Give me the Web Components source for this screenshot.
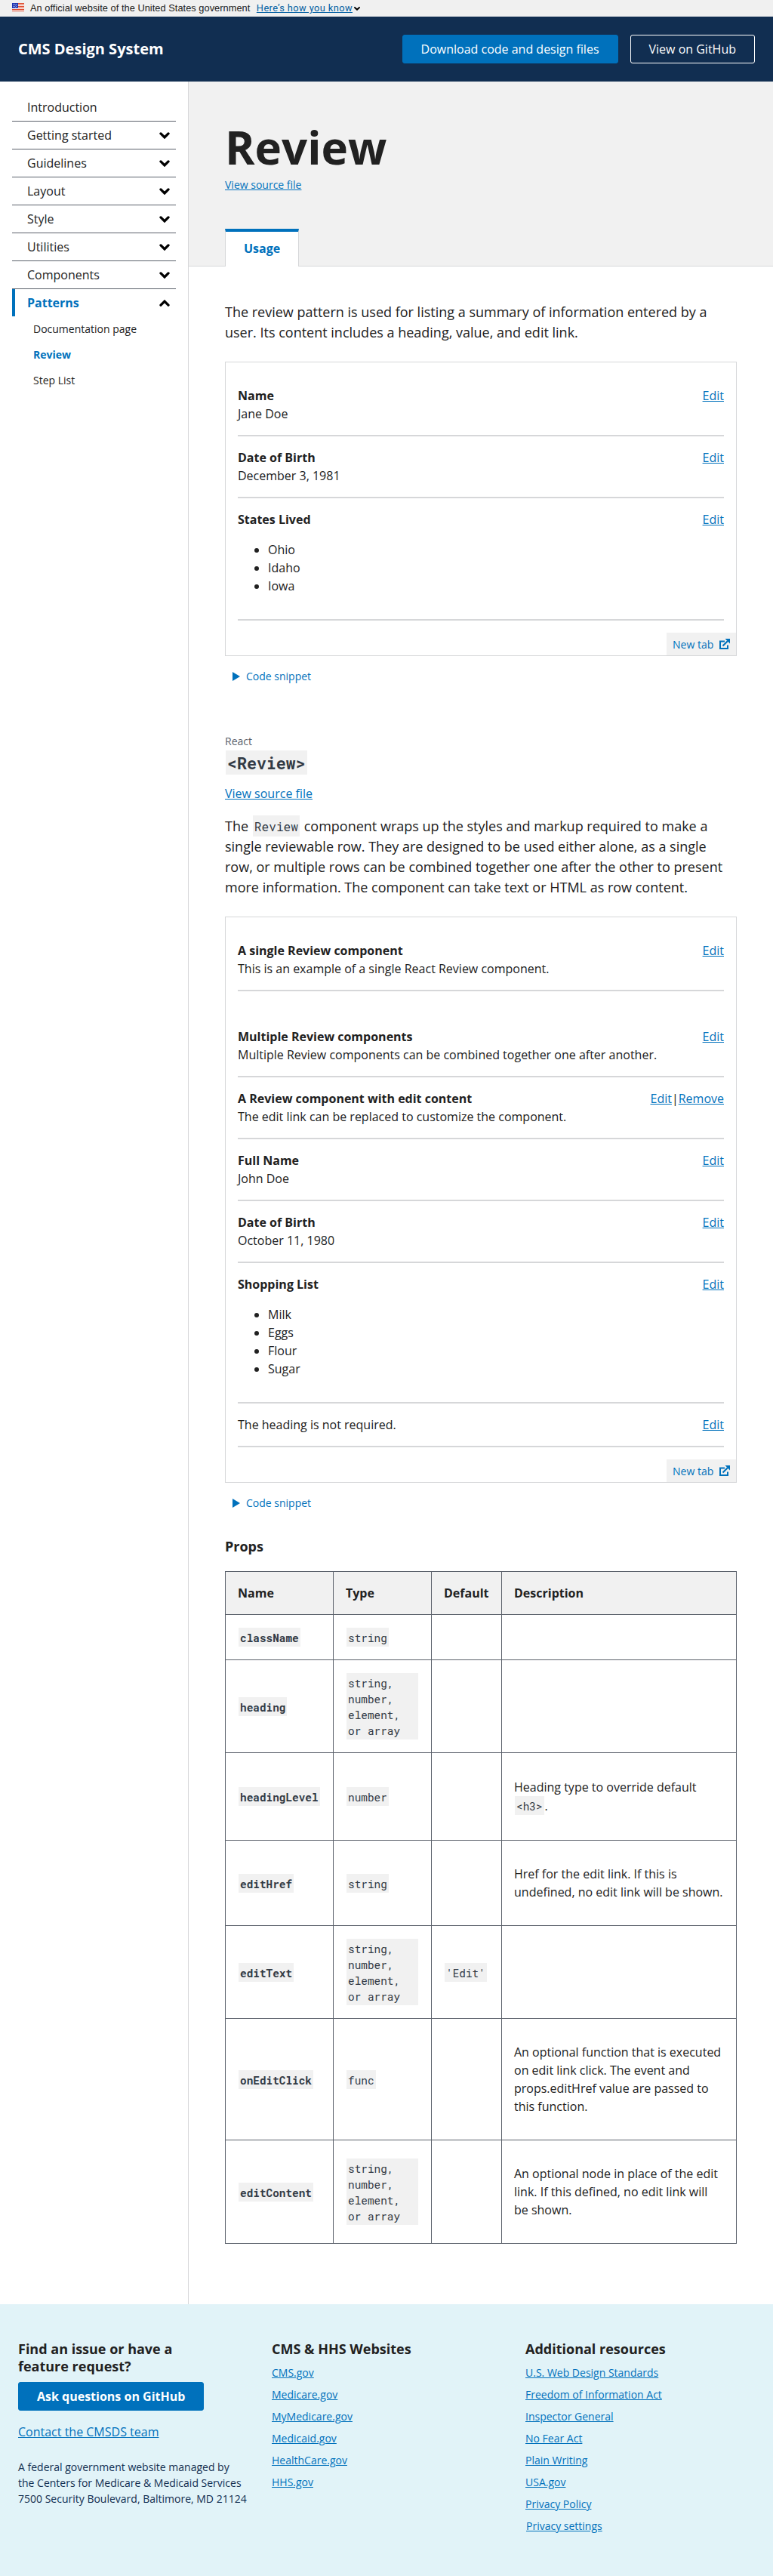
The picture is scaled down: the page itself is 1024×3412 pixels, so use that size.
<!DOCTYPE html>
<html lang="en">
<head>
<meta charset="utf-8">
<title>Review - CMS Design System</title>
<style>
  body { margin: 0; background: #fff; color: #212121; font: 16px/24px "Open Sans", sans-serif; }
  .columns { display: flex; align-items: stretch; min-height: 2944px; }
  main { flex: 1; min-width: 0; }
  .content { padding: 47px 48px 0; }
  .lead { margin: 0 0 25px; font-size: 18px; line-height: 27px; }
  .lead.second { margin: 17px 0 24px; height: 110px; }
  .kicker { margin-top: 65px; font-size: 14px; line-height: 21px; color: #5b616b; }
  .title { margin: 2px 0 13px; height: 32px; font-size: 24px; line-height: 0; }
  .title ds-code { --line: 28px; }
  .lead ds-code { --line: 24px; }
  .source { display: block; }
  h3 { margin: 36px 0 21px; font-size: 18px; line-height: 23px; }
  a { color: #0071bc; }
</style>
</head>
<body>
<ds-banner></ds-banner>
<ds-header heading="CMS Design System">
  <ds-button>Download code and design files</ds-button>
  <ds-button variant="ghost">View on GitHub</ds-button>
</ds-header>
<div class="columns">
  <ds-sidenav>
    <ds-nav-item plain>Introduction</ds-nav-item>
    <ds-nav-item>Getting started</ds-nav-item>
    <ds-nav-item>Guidelines</ds-nav-item>
    <ds-nav-item>Layout</ds-nav-item>
    <ds-nav-item>Style</ds-nav-item>
    <ds-nav-item>Utilities</ds-nav-item>
    <ds-nav-item>Components</ds-nav-item>
    <ds-nav-item open>Patterns</ds-nav-item>
    <ds-nav-sub>Documentation page</ds-nav-sub>
    <ds-nav-sub current>Review</ds-nav-sub>
    <ds-nav-sub>Step List</ds-nav-sub>
  </ds-sidenav>
  <main>
    <ds-page-title tab="Usage">Review</ds-page-title>
    <div class="content">
      <p class="lead">The review pattern is used for listing a summary of information entered by a user. Its content includes a heading, value, and edit link.</p>
      <ds-example>
        <ds-review heading="Name">Jane Doe</ds-review>
        <ds-review heading="Date of Birth">December 3, 1981</ds-review>
        <ds-review heading="States Lived"><ul><li>Ohio</li><li>Idaho</li><li>Iowa</li></ul></ds-review>
      </ds-example>
      <div class="kicker">React</div>
      <div class="title"><ds-code bold>&lt;Review&gt;</ds-code></div>
      <a class="source" href="#">View source file</a>
      <p class="lead second">The <ds-code>Review</ds-code> component wraps up the styles and markup required to make a single reviewable row. They are designed to be used either alone, as a single row, or multiple rows can be combined together one after the other to present more information. The component can take text or HTML as row content.</p>
      <ds-example>
        <ds-review heading="A single Review component" style="margin-bottom:32px">This is an example of a single React Review component.</ds-review>
        <ds-review heading="Multiple Review components">Multiple Review components can be combined together one after another.</ds-review>
        <ds-review heading="A Review component with edit content">The edit link can be replaced to customize the component.<span slot="edit"><a href="#">Edit</a>|<a href="#">Remove</a></span></ds-review>
        <ds-review heading="Full Name">John Doe</ds-review>
        <ds-review heading="Date of Birth">October 11, 1980</ds-review>
        <ds-review heading="Shopping List"><ul><li>Milk</li><li>Eggs</li><li>Flour</li><li>Sugar</li></ul></ds-review>
        <ds-review>The heading is not required.</ds-review>
      </ds-example>
      <h3>Props</h3>
      <ds-props-table></ds-props-table>
    </div>
  </main>
</div>
<ds-footer></ds-footer>

<script>
const LINK = 'a{color:#0071bc}';
const define = (name, render) => customElements.define(name, class extends HTMLElement {
  connectedCallback() {
    if (this.shadowRoot) return;
    this.attachShadow({ mode: 'open' }).innerHTML = render(this);
  }
});

define('ds-code', () => `<style>
  :host{display:inline-block;box-sizing:border-box;margin:0 1px;padding:3px 2px 1px;background:#f1f1f1;color:#323a45;
    font:400 .9em/var(--line,21px) "Roboto Mono","Liberation Mono",monospace;max-width:calc(100% - 1px);vertical-align:baseline}
  :host([bold]){font-weight:700}
</style><slot></slot>`);

define('ds-button', () => `<style>
  :host{display:inline-flex;align-items:center;box-sizing:border-box;height:38px;padding:0 24px;border:1px solid #0071bc;
    border-radius:3px;background:#0071bc;color:#fff;font-size:16px;line-height:20px;white-space:nowrap}
  :host([variant=ghost]){background:transparent;border-color:#fff}
  :host([bold]){font-weight:700}
</style><slot></slot>`);

define('ds-banner', () => {
  let stripes = '';
  for (let i = 0; i < 6; i++) stripes += `<rect y="${i * 2}" width="16" height="1" fill="#db3e1f"/>`;
  let stars = '';
  for (let r = 0; r < 4; r++) for (let c = 0; c < 3; c++)
    stars += `<rect x="${(r % 2 ? 2 : 1) + c * 2}" y="${1 + r * 1.5}" width=".8" height=".8" fill="#fff"/>`;
  return `<style>
  :host{display:flex;align-items:center;height:22px;padding-left:16px;background:#f0f0f0;color:#212121;
    font:12.8px/20px "Liberation Sans",Arial,sans-serif}
  .flag{display:block;margin:0 8px 3px 0}
  span{letter-spacing:.04px}
  a{color:#005ea2;font-family:Roboto,sans-serif;font-size:12.8px;letter-spacing:.42px;margin:0 2px 0 8.5px}
</style>
<svg class="flag" width="16" height="11" viewBox="0 0 16 11" shape-rendering="crispEdges"><rect width="16" height="11" fill="#fff"/>${stripes}<rect width="8" height="7" fill="#1e33b1"/><g shape-rendering="auto">${stars}</g></svg>
<span>An official website of the United States government</span><a href="#">Here’s how you know</a>
<svg width="8" height="5" viewBox="0 0 8 5"><path d="M1 1l3 2.8L7 1" fill="none" stroke="#000" stroke-width="1.9" stroke-linecap="round"/></svg>`;
});

define('ds-header', el => `<style>
  :host{display:flex;align-items:center;justify-content:space-between;box-sizing:border-box;height:86px;padding:0 24px;background:#112e51;color:#fff}
  b{font-size:20px;line-height:30px}
  div{display:flex;gap:16px}
</style><b>${el.getAttribute('heading')}</b><div><slot></slot></div>`);

define('ds-sidenav', () => `<style>
  :host{display:block;box-sizing:border-box;width:250px;padding:16px 16px 0;border-right:1px solid #d6d7d9}
</style><nav><slot></slot></nav>`);

define('ds-nav-item', el => {
  const chevron = el.hasAttribute('open') ? 'M2 7.2l5-5 5 5' : 'M2 1.9l5 5 5-5';
  return `<style>
  :host{display:flex;align-items:center;justify-content:space-between;box-sizing:border-box;height:37px;padding:0 8px 0 20px;
    border-bottom:1px solid #5b616b;font-size:16px;line-height:24px}
  :host([open]){height:36px;border-bottom:0;border-left:4px solid #0071bc;padding-left:16px;color:#0071bc;font-weight:700}
</style><span><slot></slot></span>${el.hasAttribute('plain') ? '' :
  `<svg width="14" height="9" viewBox="0 0 14 9"><path d="${chevron}" fill="none" stroke="#000" stroke-width="3.3" stroke-linecap="round"/></svg>`}`;
});

define('ds-nav-sub', () => `<style>
  :host{display:block;padding:6px 0 7px 28px;font-size:14px;line-height:21px}
  :host([current]){color:#0071bc;font-weight:700}
</style><slot></slot>`);

define('ds-page-title', el => `<style>
  :host{display:flex;flex-direction:column;box-sizing:border-box;height:245px;padding:49px 48px 0;background:#f1f1f1;border-bottom:1px solid #d6d7d9}
  h1{margin:0;font-size:60px;line-height:76px;font-weight:700}
  a{font-size:14px;line-height:21px;margin-top:1px}
  .tab{align-self:flex-start;box-sizing:border-box;height:50px;margin:auto 0 -1px;padding:10px 24px 0;background:#fff;color:#0071bc;
    border:1px solid #d6d7d9;border-top:4px solid #0071bc;border-bottom:0;font-weight:700}
  ${LINK}
</style><h1><slot></slot></h1><a href="#">View source file</a><div class="tab">${el.getAttribute('tab')}</div>`);

define('ds-review', el => {
  const heading = el.getAttribute('heading');
  return `<style>
  :host{display:flex;justify-content:space-between;padding:16px 0;border-bottom:2px solid #d6d7d9}
  b{display:block}
  ::slotted(ul){margin:16px 0;padding-left:40px}
  ${LINK}
</style><div>${heading ? `<b>${heading}</b>` : ''}<slot></slot></div><div><slot name="edit"><a href="#">Edit</a></slot></div>`;
});

define('ds-example', () => `<style>
  :host{display:block}
  .frame{border:1px solid #d6d7d9}
  .rows{padding:16px}
  .new{display:flex;align-items:center;box-sizing:border-box;width:92px;height:30px;margin-left:auto;padding:0 8px;background:#f1f1f1;
    color:#0071bc;font-size:14px;line-height:21px;justify-content:space-between}
  .snippet{display:flex;align-items:center;gap:8px;margin-top:16px;padding-left:10px;color:#0071bc;font-size:14px;line-height:21px}
</style>
<div class="frame"><div class="rows"><slot></slot></div>
<div class="new"><span>New tab</span><svg width="14" height="14" viewBox="0 0 14 14"><path d="M7 3.5H1V13h10V8.5" fill="none" stroke="#0071bc" stroke-width="2"/><path d="M4.5 9.5L11 3" fill="none" stroke="#0071bc" stroke-width="2.2"/><path d="M7.5 0H14v6.5z" fill="#0071bc"/></svg></div></div>
<div class="snippet"><svg width="10" height="12" viewBox="0 0 10 12"><path d="M0 0l10 6L0 12z" fill="#0071bc"/></svg><span>Code snippet</span></div>`);

define('ds-props-table', () => {
  const union = 'string, number, element, or array';
  const rows = [
    [60, 'className', 'string', '', ''],
    [123, 'heading', union, '', ''],
    [116, 'headingLevel', 'number', '', 'Heading type to override default <ds-code>&lt;h3&gt;</ds-code>.'],
    [113, 'editHref', 'string', '', 'Href for the edit link. If this is undefined, no edit link will be shown.'],
    [123, 'editText', union, "'Edit'", ''],
    [161, 'onEditClick', 'func', '', 'An optional function that is executed on edit link click. The event and props.editHref value are passed to this function.'],
    [137, 'editContent', union, '', 'An optional node in place of the edit link. If this defined, no edit link will be shown.']
  ];
  const code = (t, bold) => t ? `<ds-code ${bold ? 'bold' : ''}>${t}</ds-code>` : '';
  return `<style>
  :host{display:block}
  table{width:678px;table-layout:fixed;border-collapse:collapse;font-size:16px;line-height:24px}
  th,td{box-sizing:border-box;border:1px solid #5b616b;padding:0 16px;text-align:left;vertical-align:middle}
  th{background:#f1f1f1}
  td ds-code{display:block;width:fit-content}
  td p{margin:0}
  td p ds-code{display:inline-block}
</style><table><colgroup><col style="width:143px"><col style="width:130px"><col style="width:93px"><col></colgroup>
<thead><tr style="height:57px"><th>Name</th><th>Type</th><th>Default</th><th>Description</th></tr></thead>
<tbody>${rows.map(([h, name, type, def, text]) =>
    `<tr style="height:${h}px"><td>${code(name, true)}</td><td>${code(type)}</td><td>${code(def)}</td><td>${text ? `<p>${text}</p>` : ''}</td></tr>`).join('')}</tbody></table>`;
});

define('ds-footer', () => {
  const links = list => list.map(t => `<a href="#">${t}</a>`).join('');
  return `<style>
  :host{display:grid;grid-template-columns:336px 336px 1fr;box-sizing:border-box;height:360px;padding:48px 0 0 24px;background:#e1f3f8}
  h2{margin:0;font-size:18px;line-height:23px}
  .ask{max-width:250px}
  .contact{display:block;margin-top:16px}
  ds-button{margin-top:9px}
  p{margin:24px 0 0;font-size:14px;line-height:21px;color:#112e51}
  .links{display:flex;flex-direction:column;align-items:flex-start;gap:8px;font-size:14px;line-height:21px}
  .links h2{margin-bottom:1px}
  .links .settings{margin-left:1px}
  ${LINK}
</style>
<section><h2 class="ask">Find an issue or have a feature request?</h2><ds-button bold>Ask questions on GitHub</ds-button>
<a class="contact" href="#">Contact the CMSDS team</a>
<p>A federal government website managed by<br>the Centers for Medicare &amp; Medicaid Services<br>7500 Security Boulevard, Baltimore, MD 21124</p></section>
<section class="links"><h2>CMS &amp; HHS Websites</h2>${links(['CMS.gov', 'Medicare.gov', 'MyMedicare.gov', 'Medicaid.gov', 'HealthCare.gov', 'HHS.gov'])}</section>
<section class="links"><h2>Additional resources</h2>${links(['U.S. Web Design Standards', 'Freedom of Information Act', 'Inspector General', 'No Fear Act', 'Plain Writing', 'USA.gov', 'Privacy Policy'])}<a class="settings" href="#">Privacy settings</a></section>`;
});
</script>
</body>
</html>
